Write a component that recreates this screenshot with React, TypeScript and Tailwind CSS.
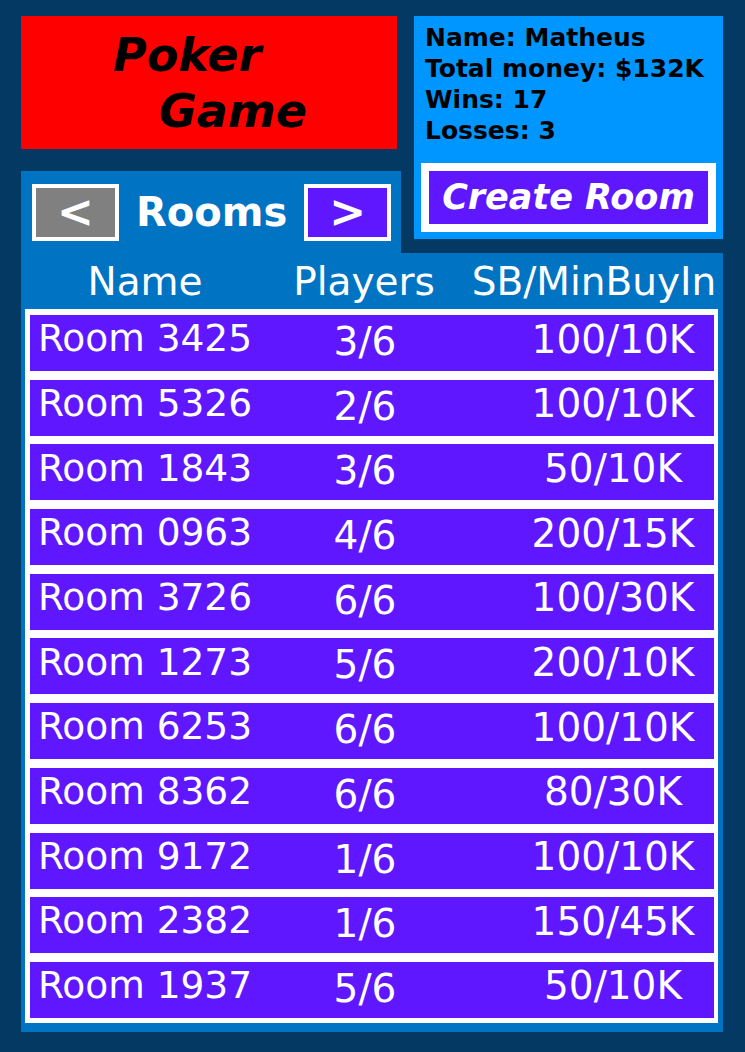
import React from 'react';

// Lobby rows
const rooms = [
  { name: 'Room 3425', players: '3/6', stakes: '100/10K' },
  { name: 'Room 5326', players: '2/6', stakes: '100/10K' },
  { name: 'Room 1843', players: '3/6', stakes: '50/10K' },
  { name: 'Room 0963', players: '4/6', stakes: '200/15K' },
  { name: 'Room 3726', players: '6/6', stakes: '100/30K' },
  { name: 'Room 1273', players: '5/6', stakes: '200/10K' },
  { name: 'Room 6253', players: '6/6', stakes: '100/10K' },
  { name: 'Room 8362', players: '6/6', stakes: '80/30K' },
  { name: 'Room 9172', players: '1/6', stakes: '100/10K' },
  { name: 'Room 2382', players: '1/6', stakes: '150/45K' },
  { name: 'Room 1937', players: '5/6', stakes: '50/10K' },
];

function NavButton({ label, gray }: { label: string; gray?: boolean }) {
  return (
    <button
      className={
        gray
          ? 'flex h-[57px] w-[87px] items-center justify-center border-4 border-white bg-[#808080] text-[44px] font-bold leading-none text-white'
          : 'flex h-[57px] w-[87px] items-center justify-center border-4 border-white bg-[#5e17ff] text-[44px] font-bold leading-none text-white'
      }
    >
      {label}
    </button>
  );
}

export default function App() {
  return (
    <div className="min-h-[1052px] w-[745px] bg-[#033963] pl-[21px] pt-[16px] font-['DejaVu_Sans',sans-serif]">
      <div className="flex items-start">
        <div className="w-[380px]">
          {/* title */}
          <div className="h-[133px] w-[376px] bg-[#ff0000] pt-[11px] text-[46px] font-bold italic leading-[56px] text-black">
            <div className="pl-[92px]">Poker</div>
            <div className="pl-[138px]">Game</div>
          </div>
          {/* rooms tab */}
          <div className="mt-[22px] flex h-[82px] items-center gap-[17px] bg-[#0073c3] pl-[11px]">
            <NavButton label="<" gray />
            <span className="text-[40px] font-bold text-white">Rooms</span>
            <NavButton label=">" />
          </div>
        </div>

        {/* player info */}
        <div className="ml-[13px] h-[223px] w-[309px] bg-[#0096ff] pt-[6px]">
          <div className="whitespace-nowrap pl-[11px] text-[25px] font-bold leading-[31px] text-black">
            <div>Name: Matheus</div>
            <div>Total money: $132K</div>
            <div>Wins: 17</div>
            <div>Losses: 3</div>
          </div>
          <button className="mx-[7px] mt-[17px] flex h-[69px] w-[295px] items-center justify-center border-8 border-white bg-[#5e17ff] text-[35px] font-bold italic text-white">
            Create Room
          </button>
        </div>
      </div>

      {/* room list */}
      <div className="h-[779px] w-[702px] bg-[#0073c3]">
        <div className="ml-[9px] grid h-[56px] grid-cols-[230px_208px_252px] items-center whitespace-nowrap text-center text-[39px] text-white">
          <div>Name</div>
          <div>Players</div>
          <div>SB/MinBuyIn</div>
        </div>
        <div className="ml-[4px] flex h-[714px] w-[693px] flex-col gap-[8.7px] bg-white pl-[5px] pt-[6px]">
          {rooms.map((room) => (
            <div
              key={room.name}
              className="grid h-[56px] w-[684px] shrink-0 grid-cols-[230px_208px_1fr] items-center whitespace-nowrap bg-[#5e17ff] pb-[8px] text-center leading-none text-white"
            >
              <div className="text-[37.5px]">{room.name}</div>
              <div className="pl-[2px] pt-[5px] text-[39px]">{room.players}</div>
              <div className="pl-[44px] text-[39px]">{room.stakes}</div>
            </div>
          ))}
        </div>
      </div>
    </div>
  );
}
